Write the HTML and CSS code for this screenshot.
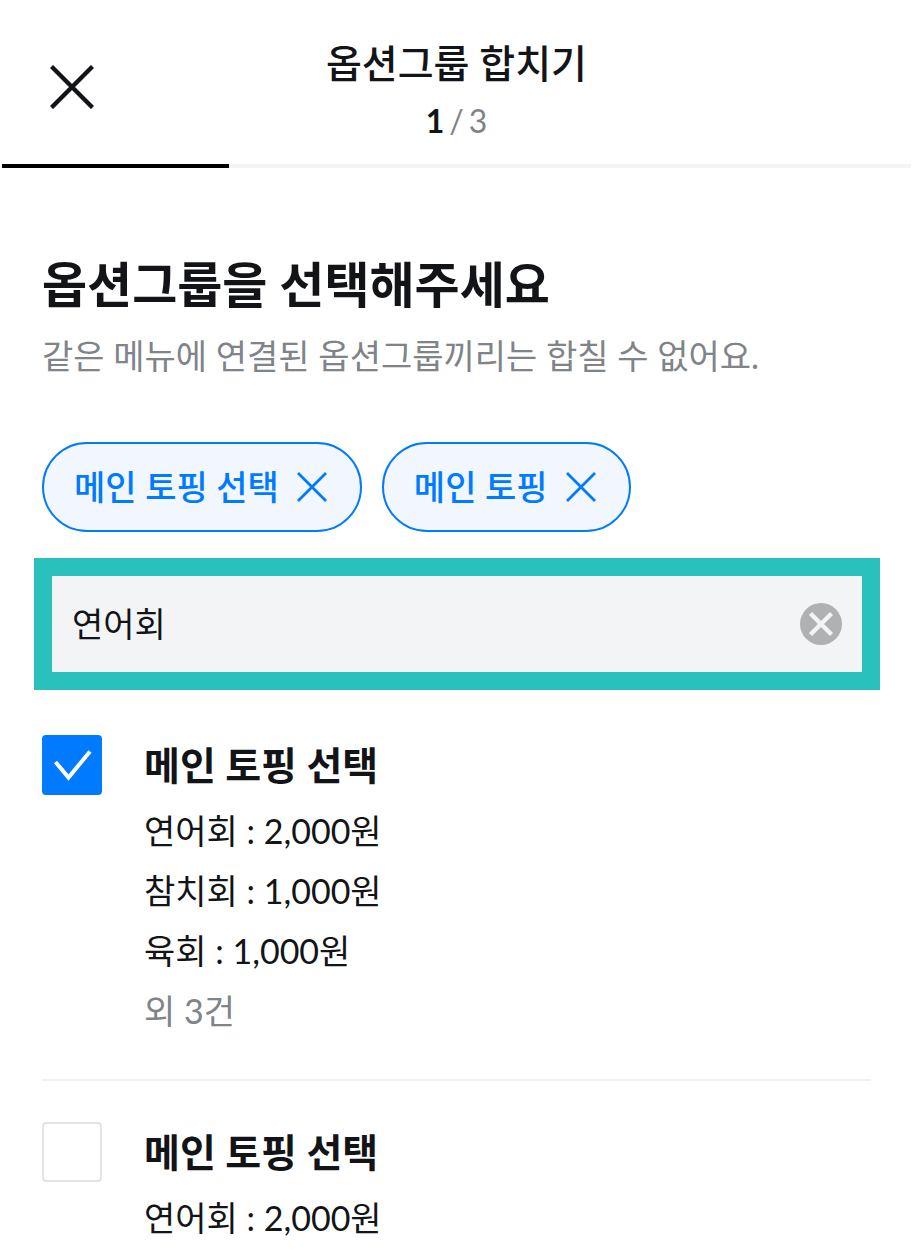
FILE: index.html
```html
<!DOCTYPE html>
<html lang="ko">
<head>
    <meta charset="UTF-8">
    <meta name="viewport" content="width=device-width, initial-scale=1.0">
    <title>옵션그룹 합치기</title>
    <link rel="stylesheet" href="styles.css">
</head>
<body>
    <div class="page">
        <header class="header">
            <button type="button" class="icon-btn" aria-label="닫기">
                <svg width="44" height="44" viewBox="0 0 44 44" fill="none" stroke="#121417" stroke-width="4.4">
                    <path d="M1.5 1.5L42.5 42.5M42.5 1.5L1.5 42.5"/>
                </svg>
            </button>
            <div class="header-text">
                <h1>옵션그룹 합치기</h1>
                <p class="step"><strong>1</strong><span>/</span><span>3</span></p>
            </div>
        </header>
        <div class="progress">
            <div class="progress-bar"></div>
        </div>

        <main class="content">
            <h2>옵션그룹을 선택해주세요</h2>
            <p class="desc">같은 메뉴에 연결된 옵션그룹끼리는 합칠 수 없어요.</p>

            <div class="chips">
                <button type="button" class="chip">
                    메인 토핑 선택
                    <svg width="30" height="30" viewBox="0 0 30 30" fill="none" stroke="currentColor" stroke-width="2.8">
                        <path d="M1 1L29 29M29 1L1 29"/>
                    </svg>
                </button>
                <button type="button" class="chip">
                    메인 토핑
                    <svg width="30" height="30" viewBox="0 0 30 30" fill="none" stroke="currentColor" stroke-width="2.8">
                        <path d="M1 1L29 29M29 1L1 29"/>
                    </svg>
                </button>
            </div>

            <div class="search">
                <input type="text" value="연어회" aria-label="옵션 검색">
                <button type="button" class="icon-btn" aria-label="지우기">
                    <svg width="42" height="42" viewBox="0 0 42 42" fill="none">
                        <circle cx="21" cy="21" r="21" fill="#b0b1b3"/>
                        <path d="M10.5 10.5L31.5 31.5M31.5 10.5L10.5 31.5" stroke="#f3f4f6" stroke-width="4.4"/>
                    </svg>
                </button>
            </div>

            <ul class="options">
                <li class="option">
                    <span class="check">
                        <input type="checkbox" id="option1" checked>
                        <svg width="60" height="60" viewBox="0 0 60 60" fill="none" stroke="#fff" stroke-width="4">
                            <path d="M13.5 27L26.5 42.5L48 16.5"/>
                        </svg>
                    </span>
                    <div>
                        <label for="option1">메인 토핑 선택</label>
                        <p>연어회 : 2,000원</p>
                        <p>참치회 : 1,000원</p>
                        <p>육회 : 1,000원</p>
                        <p class="more">외 3건</p>
                    </div>
                </li>
                <li class="option">
                    <span class="check">
                        <input type="checkbox" id="option2">
                    </span>
                    <div>
                        <label for="option2">메인 토핑 선택</label>
                        <p>연어회 : 2,000원</p>
                    </div>
                </li>
            </ul>
        </main>
    </div>
</body>
</html>
```
FILE: styles.css
```css
* {
    box-sizing: border-box;
}
body {
    margin: 0;
    background: #fff;
    color: #121417;
    font-family: Lato, "Noto Sans CJK KR", sans-serif;
    font-size: 34px;
    line-height: 60px;
}
h1, h2, p, ul {
    margin: 0;
    padding: 0;
}
button, input {
    font: inherit;
    color: inherit;
}
svg {
    display: block;
}
.page {
    margin: 0 5px 0 2px;
}
.icon-btn {
    padding: 0;
    border: none;
    background: none;
    cursor: pointer;
}
.header {
    display: grid;
    grid-template-columns: 44px 1fr 44px;
    align-items: center;
    padding: 32px 48px 16px;
}
.header .icon-btn {
    margin-bottom: 6px;
}
.header-text {
    text-align: center;
}
.header h1 {
    font-size: 39px;
    font-weight: 500;
    line-height: 62px;
}
.step {
    display: flex;
    justify-content: center;
    gap: 5px;
    color: #808388;
    font-size: 32px;
    line-height: 54px;
}
.step strong {
    color: #121417;
}
.progress {
    height: 4px;
    background: #f3f4f6;
}
.progress-bar {
    width: 25%;
    height: 100%;
    background: #000;
}
.content {
    padding: 80px 40px 0;
}
h2 {
    font-size: 49px;
    line-height: 72px;
}
.desc {
    margin-top: 6px;
    color: #808388;
}
.chips {
    display: flex;
    gap: 20px;
    margin-top: 56px;
}
.chip {
    display: flex;
    align-items: center;
    gap: 18px;
    height: 90px;
    padding: 0 33px 0 30px;
    border: 2px solid #007aff;
    border-radius: 45px;
    background: #f2f7ff;
    color: #007aff;
    font-weight: 500;
    white-space: nowrap;
    cursor: pointer;
}
.search {
    display: flex;
    align-items: center;
    margin: 26px -9px 0 -8px;
    padding: 18px 20px;
    border: 18px solid #2ac1bc;
    background: #f3f4f6;
}
.search input {
    flex: 1;
    min-width: 0;
    height: 60px;
    padding: 0;
    border: none;
    outline: none;
    background: none;
}
.options {
    margin-top: 4px;
    list-style: none;
}
.option {
    display: flex;
    gap: 42px;
    padding: 41px 0 38px;
}
.option + .option {
    border-top: 2px solid #f1f1f2;
}
.check {
    display: grid;
    flex: none;
    align-self: flex-start;
}
.check input,
.check svg {
    grid-area: 1 / 1;
}
.check svg {
    pointer-events: none;
}
.check input {
    appearance: none;
    width: 60px;
    height: 60px;
    margin: 0;
    border: 2px solid #e4e4e5;
    border-radius: 4px;
    background: #fff;
}
.check input:checked {
    border-color: #007aff;
    background: #007aff;
}
.option label {
    display: block;
    margin-bottom: 6px;
    font-size: 39px;
    font-weight: 700;
}
.more {
    color: #808388;
}
```
